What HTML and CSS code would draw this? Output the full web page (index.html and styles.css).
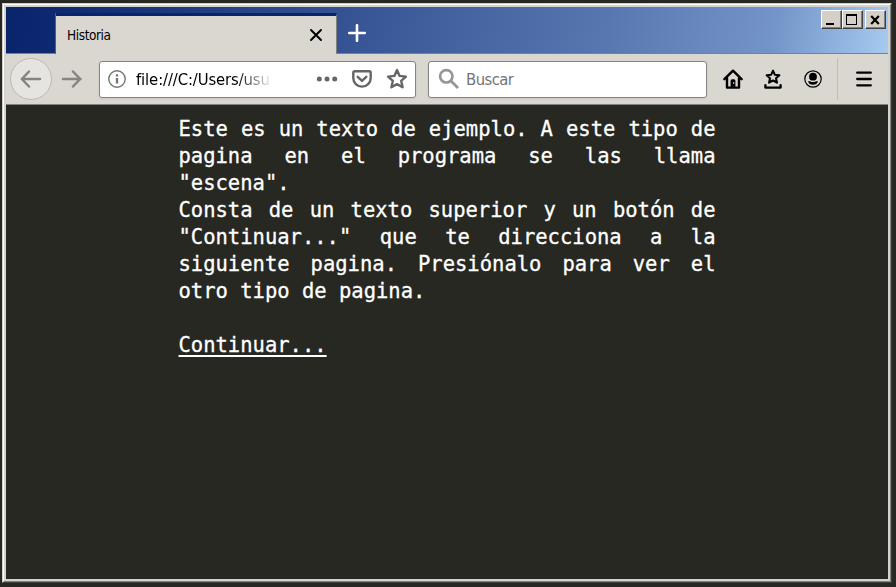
FILE: index.html
```html
<!DOCTYPE html>
<html lang="es">
<head>
<meta charset="utf-8">
<title>Historia</title>
<link rel="stylesheet" href="styles.css">
</head>
<body>
<div class="window">
  <div class="frame">
    <header class="titlebar">
      <div class="tab">
        <span class="tab-title">Historia</span>
        <svg class="tab-close" width="14" height="14" viewBox="0 0 14 14"><path d="M2 2l10 10M12 2L2 12" stroke="#000" stroke-width="2" stroke-linecap="round"/></svg>
      </div>
      <svg class="new-tab" width="18" height="18" viewBox="0 0 18 18"><path d="M9 1.2v15.6M1.2 9h15.6" stroke="#fff" stroke-width="2.6" stroke-linecap="round"/></svg>
      <div class="controls">
        <button class="control" aria-label="Minimizar"><svg width="19" height="17" shape-rendering="crispEdges"><path d="M4 12h8v2H4z"/></svg></button>
        <button class="control" aria-label="Maximizar"><svg width="19" height="17" shape-rendering="crispEdges"><path d="M3 3h11v11H3zM4 5v8h9V5z" fill-rule="evenodd"/></svg></button>
        <button class="control close" aria-label="Cerrar"><svg width="19" height="17"><path d="M5.2 5l7.6 8M12.800 5l-7.600 8" stroke="#000" stroke-width="2.2"/></svg></button>
      </div>
    </header>
    <nav class="toolbar">
      <div class="back"><svg width="22" height="20" viewBox="0 0 22 20"><path d="M20 10H2.5M9 2.5L1.8 10 9 17.5" class="arrow"/></svg></div>
      <svg class="forward" width="22" height="20" viewBox="0 0 22 20"><path d="M2 10h17.5M12 2.5l7.2 7.5-7.2 7.5" class="arrow"/></svg>
      <div class="field address">
        <svg class="info" width="18" height="18" viewBox="0 0 18 18"><circle cx="9" cy="9" r="8.2" fill="none" stroke="#757575" stroke-width="1.4"/><path d="M9 8v5.5M9 4.2v2.4" stroke="#757575" stroke-width="2.3"/></svg>
        <span class="url">file:///C:/Users/usu</span>
        <svg class="dots" width="22" height="6" viewBox="0 0 22 6" fill="#666"><circle cx="3.3" cy="3" r="2.5"/><circle cx="11" cy="3" r="2.5"/><circle cx="18.7" cy="3" r="2.5"/></svg>
        <svg class="pocket" width="20" height="18" viewBox="0 0 20 18"><path d="M2.7 1.3h14.6a1.4 1.4 0 0 1 1.4 1.4v5.2a8.7 8.7 0 0 1-17.4 0V2.7a1.4 1.4 0 0 1 1.4-1.4z" class="line"/><path d="M5.7 6.8L10 10.9l4.3-4.1" class="line" stroke-linecap="round"/></svg>
        <svg class="star" width="22" height="22" viewBox="0 0 22 22"><path d="M11 2l2.6 5.900 6.300.7-4.700 4.300 1.400 6.400L11 16.100l-5.600 3.200 1.400-6.400-4.700-4.300 6.300-.7z" class="line" stroke-linejoin="round"/></svg>
      </div>
      <div class="field search">
        <svg class="lens" width="22" height="22" viewBox="0 0 22 22"><circle cx="8.3" cy="8.3" r="6.2" fill="none" stroke="#969696" stroke-width="2.7"/><path d="M13 13l7 7" stroke="#969696" stroke-width="2.8"/></svg>
        <span class="placeholder">Buscar</span>
      </div>
      <svg class="home" width="20" height="20" viewBox="0 0 20 20"><path d="M1.4 10.2L10 1.7l8.6 8.5M4 9v9.6h12V9" fill="none" stroke="#000" stroke-width="2.4" stroke-linecap="round" stroke-linejoin="round"/><path d="M7.6 19v-7.2q0-1.5 1.5-1.5h1.8q1.5 0 1.5 1.5V19z"/><path d="M10.2 13h1v2h-1z" fill="#dad7d1"/></svg>
      <svg class="library" width="20" height="20" viewBox="0 0 20 20"><path d="M10 1.6l1.900 4.200 4.500.5-3.400 3 1 4.400L10 11.500l-4 2.200 1-4.400-3.400-3 4.500-.5z" fill="none" stroke="#000" stroke-width="2" stroke-linejoin="round"/><path d="M2.400 16.200v2.400h15.200v-2.400" fill="none" stroke="#000" stroke-width="2.300" stroke-linecap="round" stroke-linejoin="round"/></svg>
      <svg class="account" width="18" height="18" viewBox="0 0 18 18"><circle cx="9" cy="9" r="8.2" fill="none" stroke="#000" stroke-width="1.2"/><circle cx="9" cy="6.700" r="3.900"/><path d="M4 11.200Q5 11.300 6 11.200Q9 13 12 11.200Q13 11.300 14 11.200Q13 14.800 9 14.800Q5 14.800 4 11.200z"/></svg>
      <div class="separator"></div>
      <svg class="menu" width="16" height="16" viewBox="0 0 16 16"><path d="M1.200 1.700h13.600M1.200 8h13.600M1.200 14.300h13.600" stroke="#000" stroke-width="2.300" stroke-linecap="round"/></svg>
    </nav>
    <main class="page">
      <article class="scene">
        <p>Este es un texto de ejemplo. A este tipo de pagina en el programa se las llama "escena".</p>
        <p>Consta de un texto superior y un botón de "Continuar..." que te direcciona a la siguiente pagina. Presiónalo para ver el otro tipo de pagina.</p>
        <a class="continue">Continuar...</a>
      </article>
    </main>
  </div>
</div>
</body>
</html>
```
FILE: styles.css
```css
* { box-sizing: border-box; }
body {
  margin: 0;
  height: 587px;
  padding: 3px 4px 4px 2px;
  overflow: hidden;
  background: #272822;
  font-family: "DejaVu Sans Condensed", "DejaVu Sans", sans-serif;
}
svg { display: block; flex: none; }
.window {
  height: 580px;
  border: 1px solid;
  border-color: #d2cfc8 #3e3e3e #3e3e3e #d2cfc8;
}
.frame {
  height: 578px;
  display: flex;
  flex-direction: column;
  border: 1px solid;
  border-color: #fff #808080 #808080 #fff;
  padding: 2px;
  background: #d6d3cc;
}
.titlebar {
  flex: none;
  height: 47px;
  display: flex;
  align-items: flex-start;
  border-bottom: 1px solid #808080;
  background: linear-gradient(100deg, #0a246a 0%, #0e2a72 7%, #3b5998 43%, #5877b0 68%, #7495c9 87%, #a6caf0 100%);
}
.tab {
  width: 281px;
  height: 41px;
  margin: 6px 0 -1px 50px;
  display: flex;
  align-items: center;
  padding: 0 13px 0 11px;
  border-top: 3px solid #0a246a;
  border-right: 1px solid #808080;
  background: #dad7d1;
  box-shadow: -1px 0 #4a5f8f;
}
.tab-title {
  flex: 1;
  font-size: 13.500px;
  line-height: 16px;
  letter-spacing: -0.4px;
  color: #000;
  padding-bottom: 1px;
}
.tab-close { margin-top: -1px; }
.new-tab { margin: 17px 0 0 11px; }
.controls { display: flex; margin: 3px 2px 0 auto; }
.control {
  width: 21px;
  height: 19px;
  padding: 0;
  border: 1px solid;
  border-color: #fff #404040 #404040 #fff;
  background: #d4d0c8;
  box-shadow: inset -1px -1px #808080;
}
.close { margin-left: 2px; }
.toolbar {
  flex: none;
  height: 51px;
  display: flex;
  align-items: center;
  border-bottom: 1px solid #808080;
  background: #dad7d1;
}
.back {
  width: 42px;
  height: 42px;
  margin-left: 4px;
  display: flex;
  align-items: center;
  justify-content: center;
  border: 1px solid #bcb9b3;
  border-radius: 50%;
  background: #e5e4e0;
}
.arrow {
  fill: none;
  stroke: #858480;
  stroke-width: 2.5;
  stroke-linecap: round;
  stroke-linejoin: round;
}
.forward { margin-left: 9px; }
.line { fill: none; stroke: #666; stroke-width: 2.4; }
.field {
  height: 37px;
  display: flex;
  align-items: center;
  border: 1px solid #858482;
  border-radius: 3px;
  background: #fff;
  box-shadow: 0 1px 3px rgba(0, 0, 0, .08);
}
.address { width: 317px; margin-left: 16px; padding: 0 7px 0 8px; }
.url {
  width: 137px;
  margin-left: 10px;
  padding-top: 2px;
  overflow: hidden;
  white-space: nowrap;
  font-size: 16.500px;
  line-height: 22px;
  letter-spacing: -0.12px;
  color: #000;
  -webkit-mask-image: linear-gradient(90deg, #000 100px, transparent 137px);
  mask-image: linear-gradient(90deg, #000 100px, transparent 137px);
}
.dots { margin-left: 43px; }
.pocket { margin-left: 14px; }
.star { margin-left: auto; }
.search { width: 279px; margin-left: 12px; padding-left: 9px; }
.placeholder {
  margin-left: 6px;
  padding-top: 1px;
  font-size: 16.500px;
  letter-spacing: -0.55px;
  color: #757575;
}
.home { margin-left: 16px; }
.library { margin-left: 20px; }
.account { margin-left: 21px; }
.separator { width: 1px; height: 42px; margin-left: 15px; background: #c0bdb7; }
.menu { margin-left: 18px; }
.page { flex: 1; background: #272822; }
.scene {
  width: 537px;
  margin-left: 172.500px;
  padding-top: 11px;
  font: 20.5px/27px "DejaVu Sans Mono", monospace;
  color: #fff;
  -webkit-text-stroke: 0.3px #fff;
}
.scene p { margin: 0; text-align: justify; }
.continue {
  display: inline-block;
  margin-top: 27px;
  text-decoration: underline;
  text-decoration-thickness: 2px;
  text-underline-offset: 3px;
}
```
